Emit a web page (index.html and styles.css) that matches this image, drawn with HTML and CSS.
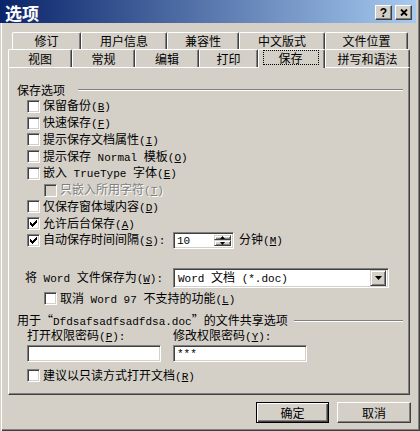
FILE: index.html
```html
<!DOCTYPE html>
<html lang="zh-CN">
<head>
<meta charset="utf-8">
<title>选项</title>
<link rel="stylesheet" href="styles.css">
</head>
<body>
<div class="window">
  <div class="titlebar">
    <span class="title">选项</span>
    <span class="tb-btn help">?</span>
    <span class="tb-btn close"><svg width="8" height="7" viewBox="0 0 8 7"><path d="M1 0.5 L7 6.5 M7 0.5 L1 6.5" stroke="#000" stroke-width="1.9" fill="none"/></svg></span>
  </div>

  <div class="tabs">
    <div class="tab-row back">
      <div class="tab">修订</div>
      <div class="tab">用户信息</div>
      <div class="tab">兼容性</div>
      <div class="tab">中文版式</div>
      <div class="tab">文件位置</div>
    </div>
    <div class="tab-row front">
      <div class="tab">视图</div>
      <div class="tab">常规</div>
      <div class="tab">编辑</div>
      <div class="tab">打印</div>
      <div class="tab sel"><span class="focus">保存</span></div>
      <div class="tab">拼写和语法</div>
    </div>
  </div>

  <div class="panel">
    <div class="group-head"><span>保存选项</span><span class="rule"></span></div>
    <div class="opts">
      <div class="row"><span class="cb"></span><span class="lbl">保留备份<span class="m">(<u>B</u>)</span></span></div>
      <div class="row"><span class="cb"></span><span class="lbl">快速保存<span class="m">(<u>F</u>)</span></span></div>
      <div class="row"><span class="cb"></span><span class="lbl">提示保存文档属性<span class="m">(<u>I</u>)</span></span></div>
      <div class="row"><span class="cb"></span><span class="lbl">提示保存<span class="m"> Normal </span>模板<span class="m">(<u>O</u>)</span></span></div>
      <div class="row"><span class="cb"></span><span class="lbl">嵌入<span class="m"> TrueType </span>字体<span class="m">(<u>E</u>)</span></span></div>
      <div class="row indent disabled"><span class="cb"></span><span class="lbl">只嵌入所用字符<span class="m">(<u>T</u>)</span></span></div>
      <div class="row"><span class="cb"></span><span class="lbl">仅保存窗体域内容<span class="m">(<u>D</u>)</span></span></div>
      <div class="row"><span class="cb"><svg width="7" height="7" viewBox="0 0 7 7"><path d="M6 0h1v1h-1z M5 1h2v1h-2z M0 2h1v1h-1z M4 2h3v1h-3z M0 3h2v1h-2z M3 3h3v1h-3z M0 4h5v1h-5z M1 5h3v1h-3z M2 6h1v1h-1z" fill="#000"/></svg></span><span class="lbl">允许后台保存<span class="m">(<u>A</u>)</span></span></div>
      <div class="row">
        <span class="cb"><svg width="7" height="7" viewBox="0 0 7 7"><path d="M6 0h1v1h-1z M5 1h2v1h-2z M0 2h1v1h-1z M4 2h3v1h-3z M0 3h2v1h-2z M3 3h3v1h-3z M0 4h5v1h-5z M1 5h3v1h-3z M2 6h1v1h-1z" fill="#000"/></svg></span>
        <span class="lbl spin-lbl">自动保存时间间隔<span class="m">(<u>S</u>):</span></span>
        <span class="spin">
          <span class="spin-val m">10</span>
          <span class="spin-btns">
            <span class="sb"><svg width="5" height="3" viewBox="0 0 5 3"><polygon points="0,3 5,3 2.5,0" fill="#000"/></svg></span>
            <span class="sb"><svg width="5" height="3" viewBox="0 0 5 3"><polygon points="0,0 5,0 2.5,3" fill="#000"/></svg></span>
          </span>
        </span>
        <span class="lbl unit">分钟<span class="m">(<u>M</u>)</span></span>
      </div>
    </div>

    <div class="saveas">
      <span class="lbl saveas-lbl">将<span class="m"> Word </span>文件保存为<span class="m">(<u>W</u>):</span></span>
      <span class="combo">
        <span class="combo-text"><span class="m">Word </span>文档<span class="m"> (*.doc)</span></span>
        <span class="combo-btn"><svg width="7" height="4" viewBox="0 0 7 4"><polygon points="0,0 7,0 3.5,4" fill="#000"/></svg></span>
      </span>
    </div>

    <div class="row cancel97"><span class="cb"></span><span class="lbl">取消<span class="m"> Word 97 </span>不支持的功能<span class="m">(<u>L</u>)</span></span></div>

    <div class="group-head share"><span>用于“<span class="m">Dfdsafsadfsadfdsa.doc</span>”的文件共享选项</span><span class="rule"></span></div>

    <div class="pw">
      <span class="lbl">打开权限密码<span class="m">(<u>P</u>):</span></span>
      <span class="lbl">修改权限密码<span class="m">(<u>Y</u>):</span></span>
      <span class="field"></span>
      <span class="field m">***</span>
    </div>

    <div class="row readonly"><span class="cb"></span><span class="lbl">建议以只读方式打开文档<span class="m">(<u>R</u>)</span></span></div>
  </div>

  <div class="footer">
    <span class="btn default">确定</span>
    <span class="btn cancel">取消</span>
  </div>
</div>
</body>
</html>
```

FILE: styles.css
```css
* { box-sizing: border-box; }
html, body { margin: 0; padding: 0; }
body {
  background: #d4d0c8;
  font-family: "Noto Sans CJK SC", "Liberation Sans", sans-serif;
  font-size: 12px;
  line-height: 14px;
  color: #000;
}
.m { font-family: "Liberation Mono", "Noto Sans CJK SC", monospace; font-size: 11px; }
u { text-decoration: underline; text-underline-offset: 1px; }

.window {
  width: 420px;
  height: 431px;
  background: #d4d0c8;
  padding: 0 4px 4px 0;
  box-shadow: inset 1px 0 0 #d4d0c8, inset 2px 0 0 #fff, inset -1px -1px 0 #404040, inset -2px -2px 0 #808080;
  display: flex;
  flex-direction: column;
}

/* title bar */
.titlebar {
  height: 23px;
  background: linear-gradient(to right, #0a246a, #a6caf0);
  display: flex;
  align-items: center;
  padding: 2px 4px 0 5px;
}
.title {
  flex: 1;
  color: #fff;
  font-weight: bold;
  font-size: 17px;
  line-height: 18px;
}
.tb-btn {
  width: 17px;
  height: 15px;
  background: #d4d0c8;
  border: 1px solid;
  border-color: #fff #404040 #404040 #fff;
  box-shadow: inset -1px -1px 0 #808080;
  display: flex;
  align-items: center;
  justify-content: center;
  font-family: "Liberation Sans", sans-serif;
  font-weight: bold;
  font-size: 12px;
  line-height: 12px;
}
.help { margin-right: 3px; }

/* tabs */
.tabs { padding-top: 9px; }
.tab-row { display: flex; }
.back { height: 17px; margin-left: 12px; }
.front { height: 18px; margin-left: 8px; }
.tab {
  height: 100%;
  border-top: 1px solid #fff;
  border-left: 1px solid #fff;
  border-right: 1px solid #404040;
  box-shadow: inset -1px 0 0 #808080;
  border-radius: 2px 2px 0 0;
  display: flex;
  align-items: center;
  justify-content: center;
  background: #d4d0c8;
}
.back .tab:nth-child(1) { width: 69px; }
.back .tab:nth-child(2) { width: 86px; }
.back .tab:nth-child(3) { width: 72px; }
.back .tab:nth-child(4) { width: 86px; }
.back .tab:nth-child(5) { width: 83px; }
.front .tab:nth-child(1) { width: 64px; }
.front .tab:nth-child(2) { width: 63px; }
.front .tab:nth-child(3) { width: 64px; }
.front .tab:nth-child(4) { width: 59px; }
.front .tab:nth-child(5) { width: 67px; }
.front .tab:nth-child(6) { width: 85px; }
.tab.sel {
  position: relative;
  z-index: 1;
  height: 19px;
  align-items: flex-start;
  padding-top: 0;
}
.focus {
  width: 56px;
  height: 15px;
  border: 1px dotted #000;
  display: flex;
  align-items: center;
  justify-content: center;
  margin-right: 2px;
}

/* panel */
.panel {
  margin-left: 8px;
  width: 402px;
  height: 328px;
  border: 1px solid;
  border-color: #fff #404040 #404040 #fff;
  box-shadow: inset -1px -1px 0 #808080;
  padding: 15px 6px 0 8px;
}
.group-head {
  display: flex;
  align-items: center;
  height: 14px;
}
.rule {
  flex: 1;
  height: 2px;
  margin-left: 13px;
  border-top: 1px solid #808080;
  border-bottom: 1px solid #fff;
}
.share .rule { margin-left: 6px; }
.share { margin-top: 7px; }

.opts { margin: 1px 0 0 10px; }
.row {
  display: flex;
  align-items: center;
  height: 16.75px;
}
.lbl { white-space: nowrap; }
.cb {
  width: 13px;
  height: 13px;
  flex: none;
  margin-right: 3px;
  background: #fff;
  border: 1px solid;
  border-color: #808080 #fff #fff #808080;
  box-shadow: inset 1px 1px 0 #404040, inset -1px -1px 0 #d4d0c8;
  display: flex;
  align-items: center;
  justify-content: center;
}
.row.indent { padding-left: 17px; }
.disabled .cb { background: #d4d0c8; }
.disabled .lbl { color: #808080; text-shadow: 1px 1px 0 #fff; }

.spin-lbl { width: 130px; flex: none; }
.spin {
  width: 61px;
  height: 17px;
  display: flex;
  background: #fff;
  border: 1px solid;
  border-color: #808080 #fff #fff #808080;
  box-shadow: inset 1px 1px 0 #404040, inset -1px -1px 0 #d4d0c8;
  padding: 2px 2px 2px 3px;
}
.spin-val { flex: 1; line-height: 13px; }
.spin-btns { width: 17px; display: flex; flex-direction: column; }
.sb {
  flex: 1;
  background: #d4d0c8;
  border: 1px solid;
  border-color: #d4d0c8 #404040 #404040 #d4d0c8;
  box-shadow: inset 1px 1px 0 #fff, inset -1px -1px 0 #808080;
  display: flex;
  align-items: center;
  justify-content: center;
}
.unit { margin-left: 5px; }

.saveas {
  display: flex;
  align-items: center;
  margin: 19px 0 0 8px;
  height: 20px;
}
.saveas-lbl { width: 148px; flex: none; }
.combo {
  width: 216px;
  height: 20px;
  display: flex;
  align-items: center;
  background: #fff;
  border: 1px solid;
  border-color: #808080 #fff #fff #808080;
  box-shadow: inset 1px 1px 0 #404040, inset -1px -1px 0 #d4d0c8;
  padding: 2px;
}
.combo-text { flex: 1; padding-left: 2px; }
.combo-btn {
  width: 16px;
  height: 16px;
  background: #d4d0c8;
  border: 1px solid;
  border-color: #d4d0c8 #404040 #404040 #d4d0c8;
  box-shadow: inset 1px 1px 0 #fff, inset -1px -1px 0 #808080;
  display: flex;
  align-items: center;
  justify-content: center;
}

.cancel97 { margin: 3px 0 0 27px; height: 16px; }

.pw {
  display: grid;
  grid-template-columns: 146px 146px;
  row-gap: 1px;
  margin-left: 10px;
}
.field {
  width: 134px;
  height: 17px;
  background: #fff;
  border: 1px solid;
  border-color: #808080 #fff #fff #808080;
  box-shadow: inset 1px 1px 0 #404040, inset -1px -1px 0 #d4d0c8;
  padding: 2px 3px;
  line-height: 13px;
}
.readonly { margin: 6px 0 0 10px; height: 16px; }

/* buttons */
.footer {
  display: flex;
  justify-content: flex-end;
  gap: 8px;
  padding: 7px 5px 0 0;
}
.btn {
  height: 21px;
  display: flex;
  align-items: center;
  justify-content: center;
  border: 1px solid;
  border-color: #fff #404040 #404040 #fff;
  box-shadow: inset -1px -1px 0 #808080;
}
.btn.default {
  width: 73px;
  border-color: #000;
  box-shadow: inset 1px 1px 0 #fff, inset -1px -1px 0 #404040, inset -2px -2px 0 #808080;
}
.btn.cancel { width: 74px; }
```
